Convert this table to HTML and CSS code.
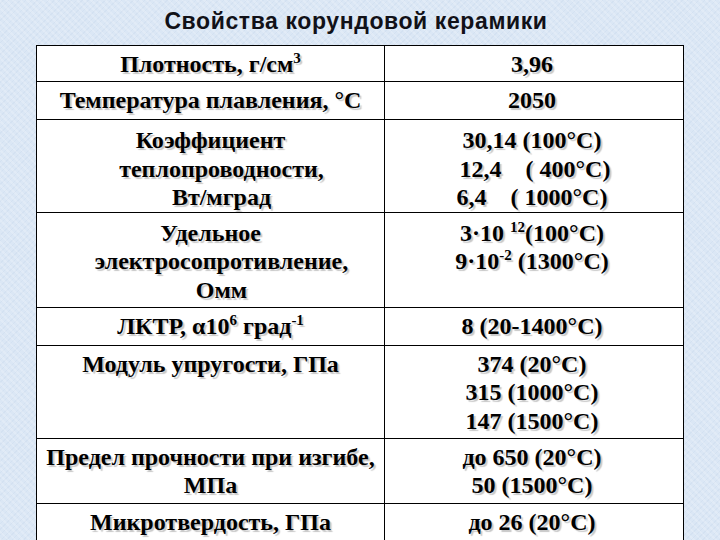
FILE: index.html
```html
<!DOCTYPE html>
<html lang="ru">
<head>
<meta charset="utf-8">
<title>Свойства корундовой керамики</title>
<link rel="stylesheet" href="styles.css">
</head>
<body>
<div class="slide">
  <h1 class="title">Свойства корундовой керамики</h1>
  <table class="props">
    <tr class="r1">
      <td class="name">Плотность, г/см<sup>3</sup></td>
      <td class="val">3,96</td>
    </tr>
    <tr class="r2">
      <td class="name">Температура плавления, °C</td>
      <td class="val">2050</td>
    </tr>
    <tr class="r3">
      <td class="name">Коэффициент<br><span class="shift">теплопроводности,</span><br><span class="shift">Вт/мград</span></td>
      <td class="val pre">30,14 (100°C)<br> 12,4    ( 400°C)<br>6,4    ( 1000°C)</td>
    </tr>
    <tr class="r4">
      <td class="name">Удельное<br><span class="shift">электросопротивление,</span><br><span class="shift">Омм</span></td>
      <td class="val">3·10 <sup>12</sup>(100°C)<br>9·10<sup>-2</sup> (1300°C)</td>
    </tr>
    <tr class="r5">
      <td class="name">ЛКТР, α10<sup>6</sup> град<sup>-1</sup></td>
      <td class="val">8 (20-1400°C)</td>
    </tr>
    <tr class="r6">
      <td class="name">Модуль упругости, ГПа</td>
      <td class="val">374 (20°C)<br>315 (1000°C)<br>147 (1500°C)</td>
    </tr>
    <tr class="r7">
      <td class="name">Предел прочности при изгибе,<br>МПа</td>
      <td class="val">до 650 (20°C)<br>50 (1500°C)</td>
    </tr>
    <tr class="r8">
      <td class="name">Микротвердость, ГПа</td>
      <td class="val">до 26 (20°C)</td>
    </tr>
  </table>
</div>
</body>
</html>
```

FILE: styles.css
```css
html, body {
  margin: 0;
  padding: 0;
}
body {
  width: 720px;
  height: 540px;
  overflow: hidden;
  background-color: #dbe7f5;
  background-image:
    repeating-linear-gradient(45deg, rgba(255,255,255,0.18) 0 2px, rgba(255,255,255,0) 2px 5px),
    repeating-linear-gradient(-45deg, rgba(160,185,215,0.12) 0 1px, rgba(160,185,215,0) 1px 4px);
}
.slide {
  padding: 8px 36px 0 36px;
}
.title {
  margin: 0 0 10px 0;
  padding-right: 8px;
  height: 27px;
  text-align: center;
  font-family: "Liberation Sans", Arial, sans-serif;
  font-weight: bold;
  font-size: 23px;
  letter-spacing: 0.6px;
  line-height: 27px;
  color: #111118;
}
.props {
  width: 648px;
  border-collapse: collapse;
  background: #fff;
  table-layout: fixed;
}
.props td {
  border: 1px solid #000;
  padding: 4px 4px 0 4px;
  vertical-align: top;
  text-align: center;
  font-family: "Liberation Serif", "Times New Roman", serif;
  font-weight: bold;
  font-size: 24px;
  line-height: 28.5px;
  color: #000;
  text-shadow: 2px 2px 1px rgba(0,0,0,0.22);
}
.props td.name {
  width: 339px;
}
.props td.val {
  padding-left: 0;
}
.props td.pre {
  white-space: pre;
}
.props .shift {
  padding-left: 22px;
}
.props sup {
  font-size: 15px;
  line-height: 0;
  vertical-align: 9px;
}
.r1 { height: 36px; }
.r2 { height: 38px; }
.r3 { height: 92px; }
.r4 { height: 95px; }
.r5 { height: 38px; }
.r6 { height: 93px; }
.r7 { height: 65px; }
.r8 { height: 60px; }
.r3 td, .r4 td { padding-top: 6px; }
```
